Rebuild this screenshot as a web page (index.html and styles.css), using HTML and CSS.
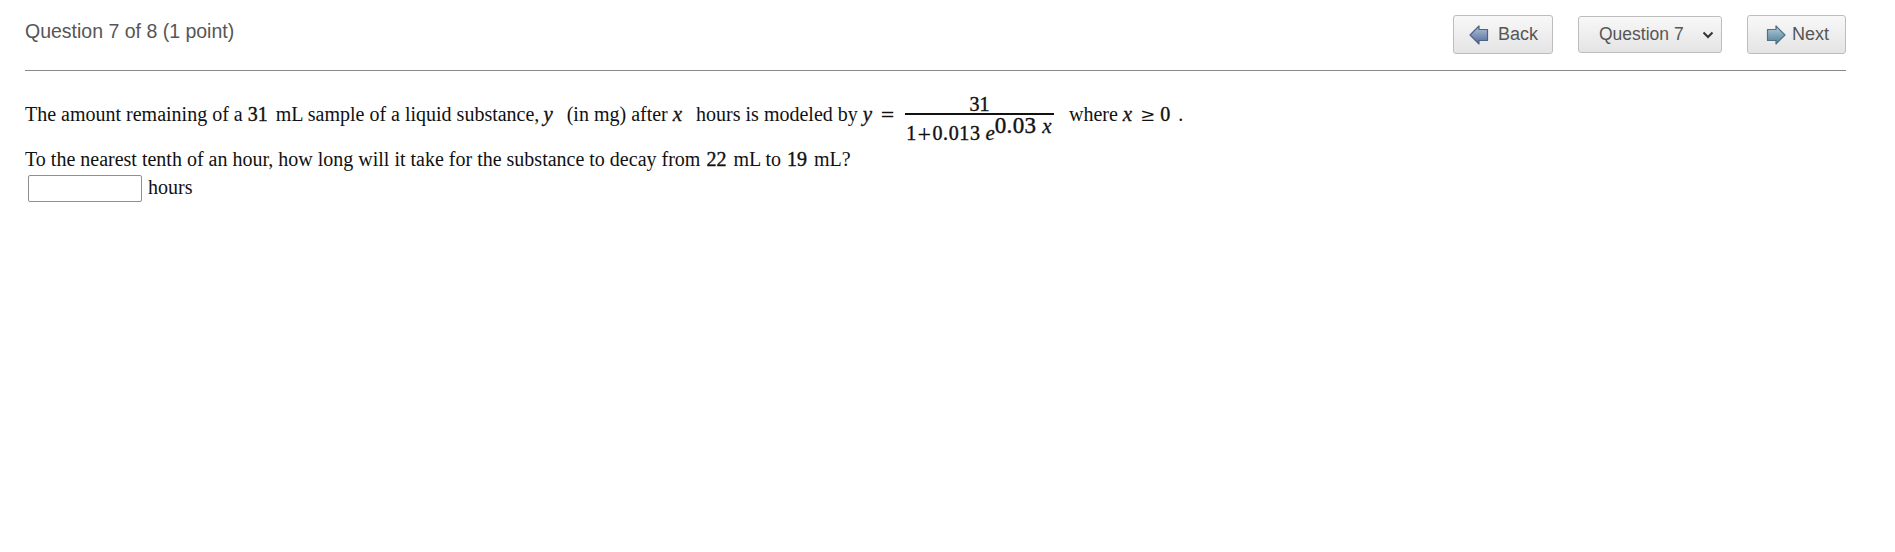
FILE: index.html
```html
<!DOCTYPE html>
<html lang="en">
  <head>
    <meta charset="UTF-8" />
    <title>Question 7 of 8</title>
    <link rel="stylesheet" href="styles.css">
  </head>
  <body>
    <svg class="defs" width="0" height="0">
      <defs>
        <linearGradient id="back-fill" x1="0" y1="0" x2="0" y2="1">
          <stop offset="0" stop-color="#b4c2da" />
          <stop offset="1" stop-color="#4f6a98" />
        </linearGradient>
        <linearGradient id="next-fill" x1="0" y1="0" x2="0" y2="1">
          <stop offset="0" stop-color="#b4ced9" />
          <stop offset="1" stop-color="#4f7c94" />
        </linearGradient>
      </defs>
    </svg>
    <div class="header">
      <div class="title">Question 7 of 8 (1 point)</div>
      <div class="nav">
        <button class="nav-btn back">
          <svg class="arrow" width="20" height="20" viewBox="0 0 20 20">
            <path d="M1 10 10 1V4.500H18.500V15.500H10V19Z" fill="url(#back-fill)" stroke="#4d6287" stroke-width="1.200" stroke-linejoin="round" />
          </svg>
          Back
        </button>
        <div class="question-select">
          <span>Question 7</span>
          <svg class="chevron" width="12" height="8" viewBox="0 0 12 8">
            <path d="M1.500 1.500 6 6l4.500-4.500" fill="none" stroke="#333" stroke-width="2" />
          </svg>
        </div>
        <button class="nav-btn next">
          <svg class="arrow" width="20" height="20" viewBox="0 0 20 20">
            <path d="M19 10 10 1V4.500H1.500V15.500H10V19Z" fill="url(#next-fill)" stroke="#4d7186" stroke-width="1.200" stroke-linejoin="round" />
          </svg>
          Next
        </button>
      </div>
    </div>
    <div class="question">
      <div class="line first">
        <span>The amount remaining of a</span>
        <span class="num gap-s">31</span>
        <span class="gap-m">mL sample of a liquid substance,</span>
        <i class="var gap-xs">y</i>
        <span class="gap-xl">(in mg) after</span>
        <i class="var gap-s">x</i>
        <span class="gap-xl">hours is modeled by</span>
        <i class="var gap-s">y</i>
        <span class="sym gap-m">=</span>
        <span class="frac">
          <span class="top num">31</span>
          <span class="bottom num"><span class="coef">1<span class="sym">+</span>0.013</span> <i class="var">e</i><span class="exp">0.03 <i class="var">x</i></span></span>
        </span>
        <span>where</span>
        <i class="var gap-s">x</i>
        <span class="sym gap-m">≥</span>
        <span class="num gap-s">0</span>
        <span class="gap-m">.</span>
      </div>
      <div class="line second">
        To the nearest tenth of an hour, how long will it take for the substance to decay from <span class="num">22</span> mL to <span class="num">19</span> mL?
      </div>
      <div class="answer">
        <input type="text" class="answer-box" />
        <span class="unit">hours</span>
      </div>
    </div>
  </body>
</html>
```

FILE: styles.css
```css
body {
  margin: 0;
  background-color: #fff;
  font-family: "Liberation Serif", serif;
  font-size: 20px;
  color: #111;
}

.defs {
  display: block;
  height: 0;
}

.header {
  margin: 0 49px 0 25px;
  height: 71px;
  padding-top: 15px;
  box-sizing: border-box;
  border-bottom: 1px solid #8a8a8a;
  display: flex;
  justify-content: space-between;
  align-items: flex-start;
  font-family: "Liberation Sans", Arial, sans-serif;
}

.title {
  font-size: 19.5px;
  line-height: 33px;
  color: #565656;
}

.nav {
  display: flex;
  align-items: center;
  gap: 25px;
}

.nav-btn,
.question-select {
  display: flex;
  align-items: center;
  box-sizing: border-box;
  border: 1px solid #bdbdbd;
  border-radius: 3px;
  background: linear-gradient(#f8f8f8, #e4e4e4);
  font-family: inherit;
  font-size: 18px;
  color: #565656;
  padding: 0;
}

.nav-btn {
  height: 39px;
}

.back {
  width: 100px;
  padding-left: 15px;
  gap: 9px;
}

.next {
  width: 99px;
  padding-left: 18px;
  gap: 6px;
}

.question-select {
  width: 144px;
  height: 37px;
  padding-left: 20px;
  justify-content: space-between;
  padding-right: 7px;
  font-size: 17.5px;
}

.question {
  padding: 14px 25px 0;
}

.line {
  white-space: nowrap;
}

.first {
  display: flex;
  align-items: center;
  height: 58px;
}

.second {
  margin-top: 2px;
  line-height: 28px;
}

.second .num {
  margin: 0 2px 0 1px;
}

.num {
  -webkit-text-stroke: 0.4px #111;
}

.var {
  font-style: italic;
  font-size: 21px;
  -webkit-text-stroke: 0.3px #111;
}

.sym {
  font-family: "DejaVu Serif", serif;
  font-size: 18px;
  -webkit-text-stroke: 0;
}

.gap-xs {
  margin-left: 4px;
}

.gap-s {
  margin-left: 5px;
}

.gap-m {
  margin-left: 8px;
}

.gap-xl {
  margin-left: 14px;
}

.frac {
  display: inline-flex;
  flex-direction: column;
  align-items: center;
  margin: 0 15px 0 10px;
}

.frac .top {
  padding-top: 16px;
  line-height: 18px;
}

.frac .bottom {
  border-top: 2px solid #111;
  padding: 2px 2px 0 1px;
  line-height: 32px;
}

.coef {
  letter-spacing: 0.6px;
}

.exp {
  font-size: 23px;
  letter-spacing: 0.3px;
  position: relative;
  top: -7px;
}

.answer {
  display: flex;
  align-items: center;
  gap: 6px;
  margin: 2px 0 0 3px;
}

.answer-box {
  box-sizing: border-box;
  width: 114px;
  height: 27px;
  border: 1px solid #8f8f8f;
  border-radius: 2px;
  background-color: #fff;
  padding: 0;
}

.unit {
  margin-bottom: 2px;
}
```
